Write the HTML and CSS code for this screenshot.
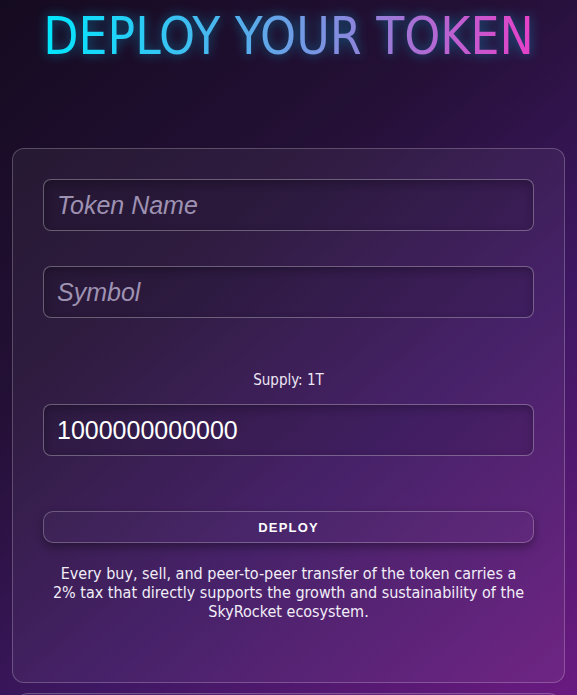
FILE: index.html
```html
<!DOCTYPE html>
<html lang="en">
<head>
<meta charset="utf-8">
<title>Deploy Your Token</title>
<link rel="stylesheet" href="styles.css">
</head>
<body>
<main class="page">
  <h1 class="title">DEPLOY YOUR TOKEN</h1>
  <section class="card">
    <input class="field" type="text" placeholder="Token Name">
    <input class="field field-gap" type="text" placeholder="Symbol">
    <div class="supply">Supply: 1T</div>
    <input class="field" type="text" value="1000000000000">
    <button class="deploy" type="button">DEPLOY</button>
    <p class="note">Every buy, sell, and peer-to-peer transfer of the token carries a 2% tax that directly supports the growth and sustainability of the SkyRocket ecosystem.</p>
  </section>
  <section class="card card-next"></section>
</main>
</body>
</html>
```
FILE: styles.css
```css
html, body {
  margin: 0;
  padding: 0;
  height: 100%;
}
body {
  background: linear-gradient(140deg, #150b20 0%, #241036 35%, #3e1762 65%, #6a1a80 100%);
  background-attachment: fixed;
  font-family: "DejaVu Sans Condensed", "DejaVu Sans", sans-serif;
  color: #fff;
  overflow: hidden;
}
.page {
  display: flex;
  flex-direction: column;
  align-items: center;
}
.title {
  margin: 9px 0 0 0;
  font-size: 51px;
  line-height: 56px;
  font-weight: 400;
  letter-spacing: 0;
  background: linear-gradient(90deg, #00e8ff 0%, #5fa8ea 45%, #9a7ad8 70%, #e640c8 100%);
  -webkit-background-clip: text;
  background-clip: text;
  color: transparent;
  filter: drop-shadow(0 0 6px rgba(0, 200, 255, 0.45));
}
.card {
  box-sizing: border-box;
  width: 553px;
  height: 535px;
  margin-top: 83px;
  padding: 30px 30px 0 30px;
  border: 1px solid rgba(255, 255, 255, 0.22);
  border-radius: 12px;
  background: rgba(255, 255, 255, 0.05);
  display: flex;
  flex-direction: column;
  align-items: stretch;
}
.card-next {
  margin-top: 10px;
  width: 545px;
}
.field {
  box-sizing: border-box;
  height: 52px;
  width: 100%;
  padding: 0 13px;
  margin: 0;
  border: 1px solid rgba(255, 255, 255, 0.3);
  border-radius: 8px;
  background: rgba(20, 5, 35, 0.12);
  box-shadow: inset 0 3px 8px rgba(0, 0, 0, 0.25);
  font-family: "Liberation Sans", Arial, sans-serif;
  font-size: 25px;
  color: #fff;
  outline: none;
}
.field::placeholder {
  color: #9e92b2;
  font-style: italic;
}
.field-gap {
  margin-top: 35px;
}
.supply {
  margin-top: 50px;
  height: 24px;
  line-height: 24px;
  text-align: center;
  font-size: 15px;
  color: #ece6f4;
  margin-bottom: 12px;
}
.deploy {
  margin-top: 55px;
  height: 32px;
  width: 100%;
  border: 1px solid rgba(255, 255, 255, 0.25);
  border-radius: 10px;
  background: rgba(255, 255, 255, 0.02);
  box-shadow: 0 4px 10px rgba(0, 0, 0, 0.35);
  color: #fff;
  font-family: "Liberation Sans", Arial, sans-serif;
  font-weight: 700;
  font-size: 13px;
  letter-spacing: 1.2px;
  padding: 0;
}
.note {
  margin: 21px 6px 0 6px;
  text-align: center;
  font-size: 16px;
  line-height: 19px;
  color: #f2eef8;
}
```
